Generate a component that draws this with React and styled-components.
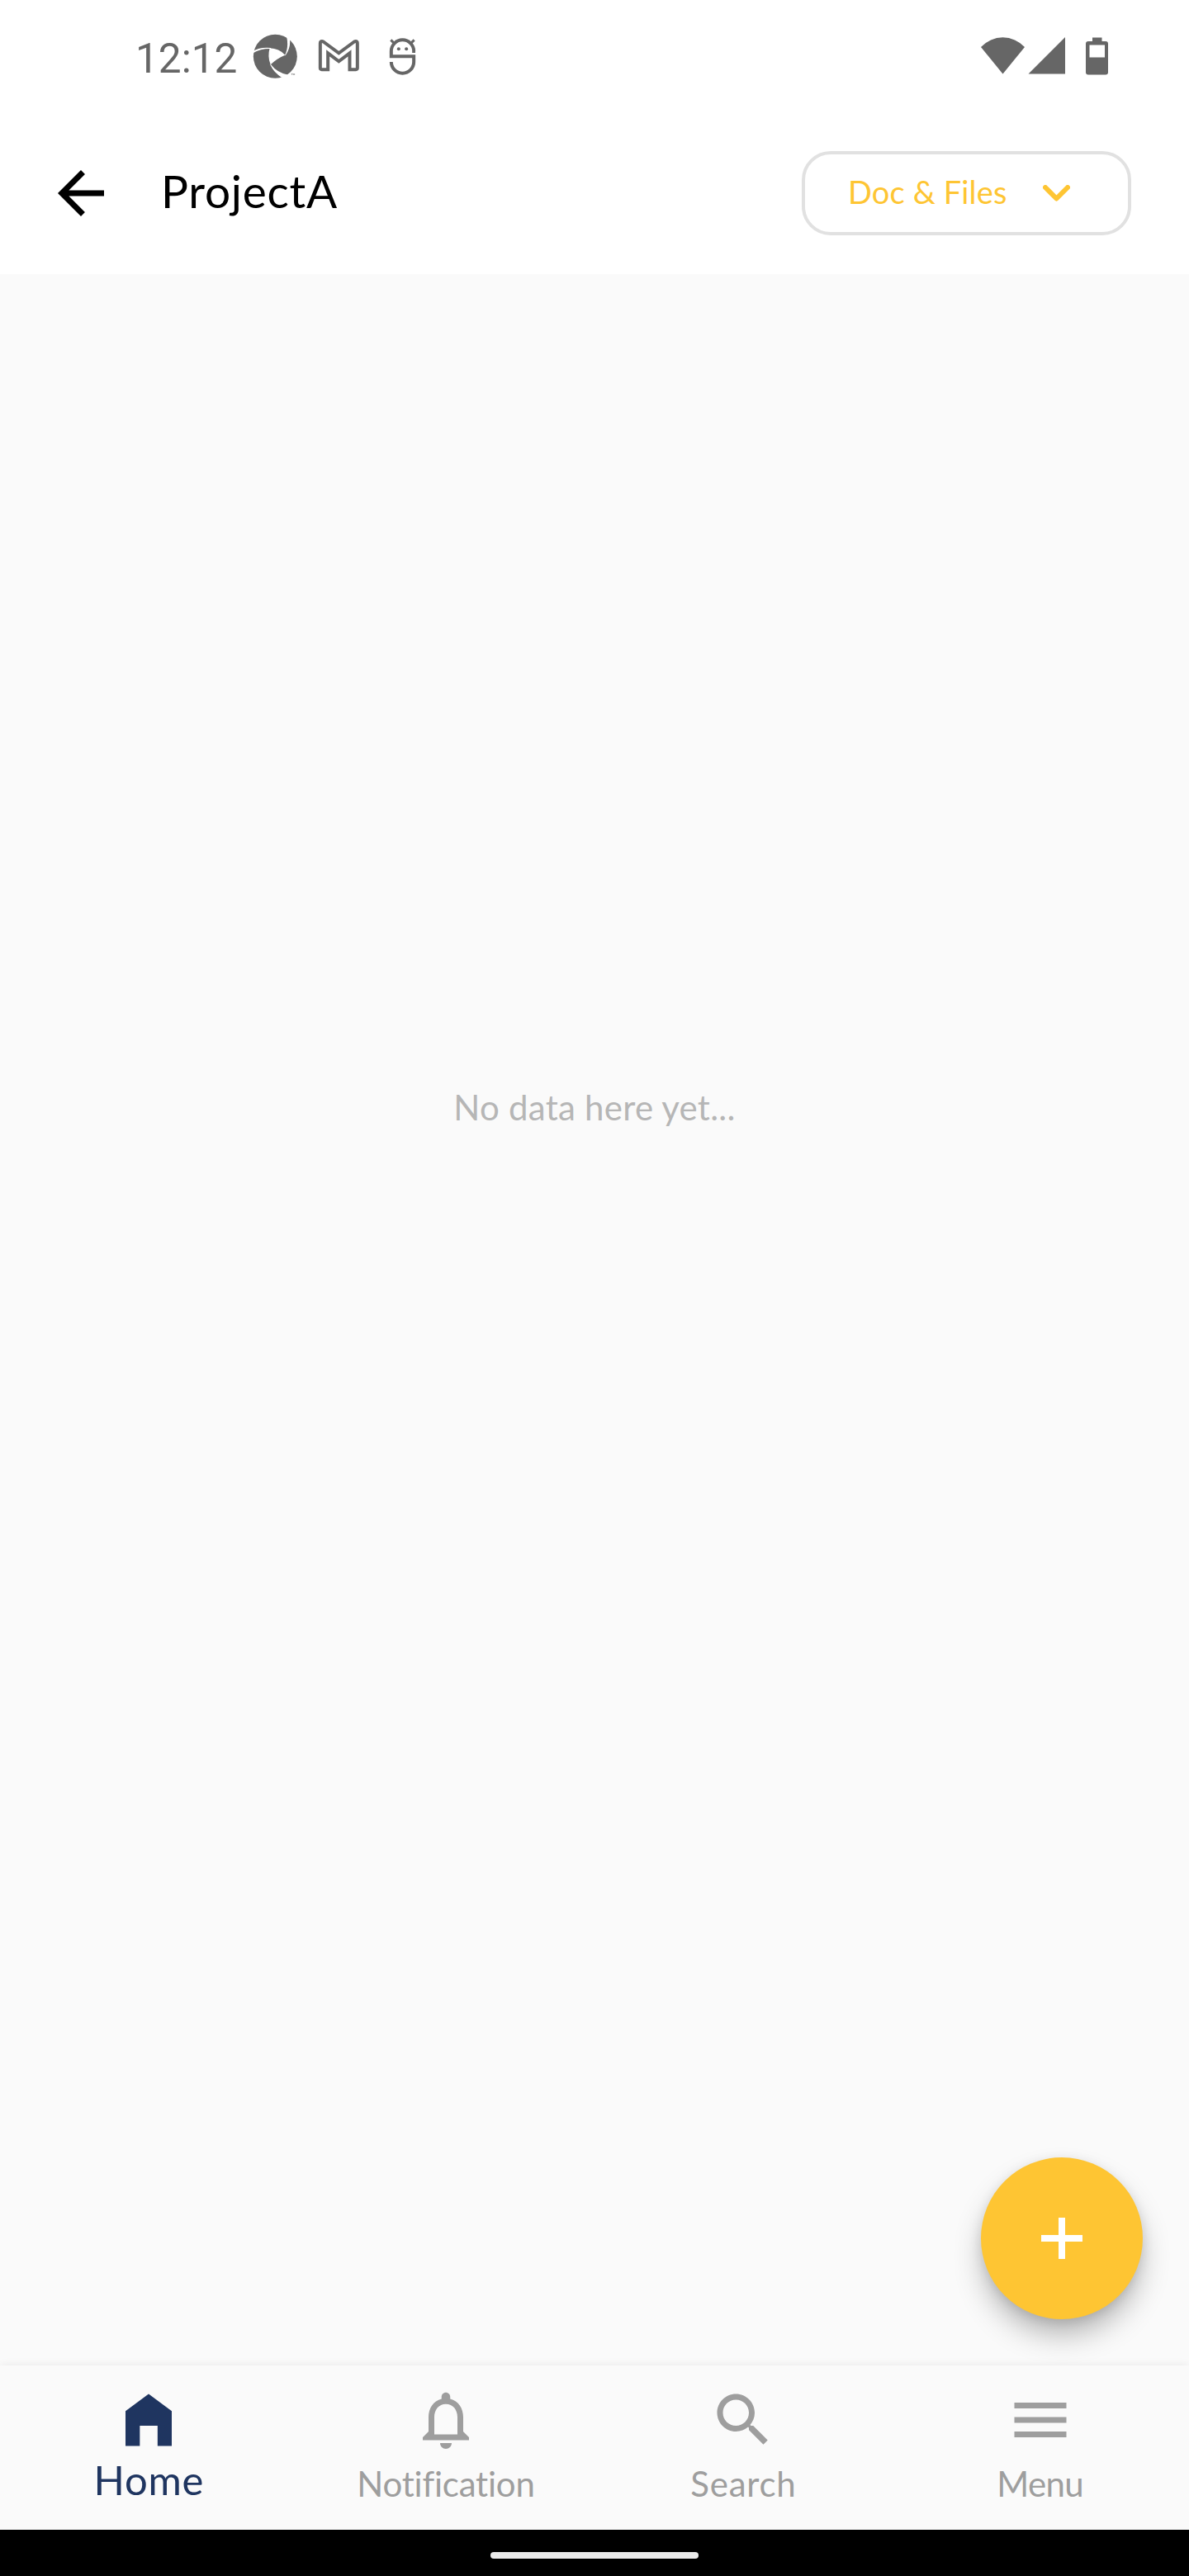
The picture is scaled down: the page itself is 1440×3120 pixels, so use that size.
import React from "react";
import styled, { createGlobalStyle } from "styled-components";

const GlobalStyle = createGlobalStyle`
  * { box-sizing: border-box; }
  body { margin: 0; background: #fafafa; }
  svg { display: block; flex: none; }
`;

const Screen = styled.div`
  width: 1440px;
  height: 3120px;
  display: flex;
  flex-direction: column;
  background: #fafafa;
  font-family: "Lato", "Liberation Sans", sans-serif;
  font-variant-ligatures: none;
  overflow: hidden;
`;

const StatusBar = styled.div`
  height: 136px;
  flex: none;
  padding: 2px 98px 0 164px;
  display: flex;
  align-items: center;
  justify-content: space-between;
  background: #fff;
  color: #666;
`;

const StatusGroup = styled.div`
  display: flex;
  align-items: center;
`;

const Clock = styled.span`
  width: 123.5px;
  padding-top: 3px;
  font: 49.5px/66px "Roboto", sans-serif;
`;

const StatusIcon = styled.svg`
  height: 66px;
  width: ${(p) => p.$w}px;
  margin-left: ${(p) => p.$gap || 0}px;
`;

const Header = styled.header`
  height: 196px;
  flex: none;
  padding: 0 70px 0 56px;
  display: flex;
  align-items: center;
  background: #fff;
`;

const Title = styled.h1`
  flex: 1;
  margin: 0 0 0 55px;
  padding-bottom: 6px;
  font-size: 55px;
  line-height: 70px;
  font-weight: 400;
  letter-spacing: 0.75px;
  color: #000;
`;

const Dropdown = styled.button`
  width: 399px;
  height: 102px;
  padding: 0 70px 0 52px;
  display: flex;
  align-items: center;
  justify-content: space-between;
  border: 4px solid #e1e1e1;
  border-radius: 35px;
  background: #fff;
  color: #fec533;
  font: 400 38px/50px "Lato", sans-serif;
  letter-spacing: 0.15px;
`;

const DropdownLabel = styled.span`
  padding-bottom: 5px;
`;

const Content = styled.main`
  position: relative;
  flex: 1;
  display: flex;
  justify-content: center;
  padding-top: 982px;
`;

const EmptyText = styled.p`
  margin: 0;
  font-size: 42px;
  line-height: 54px;
  letter-spacing: 0.25px;
  color: #b6b6b6;
`;

const AddButton = styled.button`
  position: absolute;
  right: 56px;
  bottom: 56px;
  width: 196px;
  height: 196px;
  padding: 0;
  border: 0;
  border-radius: 50%;
  display: flex;
  align-items: center;
  justify-content: center;
  background: #fec533;
  box-shadow: 0 21px 36px -4px rgba(0, 0, 0, 0.3), 0 3px 14px rgba(0, 0, 0, 0.1);
`;

const NavBar = styled.nav`
  height: 199px;
  flex: none;
  display: grid;
  grid-template-columns: repeat(4, 1fr);
  background: #fafafa;
  box-shadow: 0 0 10px rgba(0, 0, 0, 0.08);
  z-index: 1;
`;

const NavItem = styled.div`
  display: flex;
  flex-direction: column;
  align-items: center;
  padding-top: 24px;
  color: ${(p) => (p.$active ? "#1f3560" : "#9e9e9e")};
`;

const NavLabel = styled.span`
  margin-top: ${(p) => (p.$active ? 0 : 8)}px;
  font-size: ${(p) => (p.$active ? 49 : 42)}px;
  line-height: ${(p) => (p.$active ? 60 : 54)}px;
  letter-spacing: ${(p) => p.$spacing}px;
  margin-right: ${(p) => -p.$spacing}px;
`;

const GestureBar = styled.div`
  height: 56px;
  flex: none;
  display: flex;
  align-items: center;
  justify-content: center;
  padding-top: 6px;
  background: #000;
`;

const GestureHandle = styled.div`
  width: 252px;
  height: 8px;
  border-radius: 4px;
  background: #ebebeb;
`;

const MaterialIcon = ({ d }) => (
  <svg width="84" height="84" viewBox="0 0 24 24" fill="currentColor">
    <path d={d} />
  </svg>
);

const icons = {
  back: "M20 11H7.83l5.59-5.59L12 4l-8 8 8 8 1.41-1.41L7.83 13H20v-2z",
  home: "M12 3L20 8.95V21H15.1V14H8.95V21H4V8.95z",
  bell: "M12 22c1.1 0 2-.9 2-2h-4c0 1.1.9 2 2 2zm6-6v-5c0-3.07-1.63-5.64-4.5-6.32V4c0-.83-.67-1.5-1.5-1.5s-1.5.67-1.5 1.5v.68C7.64 5.36 6 7.92 6 11v5l-2 2v1h16v-1l-2-2zm-2 1H8v-6c0-2.48 1.51-4.5 4-4.5s4 2.02 4 4.5v6z",
  search:
    "M15.5 14h-.79l-.28-.27C15.41 12.59 16 11.11 16 9.5 16 5.91 13.09 3 9.5 3S3 5.91 3 9.5 5.91 16 9.5 16c1.61 0 3.09-.59 4.23-1.57l.27.28v.79l5 4.99L20.49 19l-4.99-5zm-6 0C7.01 14 5 11.99 5 9.5S7.01 5 9.5 5 14 7.01 14 9.5 11.99 14 9.5 14z",
  menu: "M3 18h18v-2H3v2zm0-5h18v-2H3v2zm0-7v2h18V6H3z",
};

const tabs = [
  { label: "Home", icon: "home", spacing: 0.75, active: true },
  { label: "Notification", icon: "bell", spacing: -0.2 },
  { label: "Search", icon: "search", spacing: 0.75 },
  { label: "Menu", icon: "menu", spacing: -0.7 },
];

export default function App() {
  return (
    <Screen>
      <GlobalStyle />
      <StatusBar>
        <StatusGroup>
          <Clock>12:12</Clock>
          <StatusIcon $w={55} $gap={18.5} viewBox="18 0 165 198">
            <circle cx="100" cy="97" r="79.5" fill="#666" />
            <path d="M80 67Q114 68 136 92Q106 104 83 127Q71 98 80 67z" fill="#fff" />
            <path
              d="M17 79Q45 62 84 66L84 69Q48 68 17 86zM135 93Q150 64 141 23L153 34Q157 66 137 94zM81 126Q96 156 124 174L148 164Q108 158 84 126z"
              fill="#fff"
            />
            <path d="M126 172.500Q100 158 88 138Q106 160 143 165Q137 170 126 172.500z" fill="#fff" />
            <path d="M158 160h6M161 160v5M166 165v-5l2 3 2-3v5" stroke="#666" strokeWidth="1.500" fill="none" />
          </StatusIcon>
          <StatusIcon $w={51} $gap={24} viewBox="15 0 153 198" fill="none" stroke="#666" strokeWidth="12">
            <path d="M23.500 139V50Q23.500 42 30 42Q34 42 37 45L91 85L145 45Q148 42 152 42Q158.500 42 158.500 50V139Q158.500 144.500 153 144.500H130.500V85L91 115L51.500 85V144.500H29Q23.500 144.500 23.500 139z" />
          </StatusIcon>
          <StatusIcon $w={33} $gap={35} viewBox="273 0 99 198" fill="none" stroke="#666" strokeWidth="12">
            <path d="M369 78H363.500A41 41 0 0 0 281.500 78V97H363.500V117A41 41 0 0 1 281.500 117" />
            <path d="M280 37L292 49M365 37L353 49" strokeWidth="9" />
            <circle cx="308.500" cy="70" r="6" fill="#666" stroke="none" />
            <circle cx="336.500" cy="70" r="6" fill="#666" stroke="none" />
          </StatusIcon>
        </StatusGroup>
        <StatusGroup>
          <StatusIcon $w={54} viewBox="1188 36 54 66" fill="#666">
            <path d="M1188 57A36 36 0 0 1 1241 57L1214.500 89.500z" />
          </StatusIcon>
          <StatusIcon $w={45} $gap={3} viewBox="1245 36 45 66" fill="#666">
            <path d="M1290 45V89.500H1245.500z" />
          </StatusIcon>
          <StatusIcon $w={27} $gap={25} viewBox="1315 36 27 66" fill="#666">
            <path
              fillRule="evenodd"
              d="M1323 45.500H1334.500V50H1339Q1342 50 1342 53V87.500Q1342 90.500 1339 90.500H1318Q1315 90.500 1315 87.500V53Q1315 50 1318 50H1323zM1319.500 54.500V69.500H1338V54.500z"
            />
          </StatusIcon>
        </StatusGroup>
      </StatusBar>

      <Header>
        <MaterialIcon d={icons.back} />
        <Title>ProjectA</Title>
        <Dropdown>
          <DropdownLabel>Doc &amp; Files</DropdownLabel>
          <svg width="33" height="20" viewBox="0 0 33 20" fill="none" stroke="currentColor">
            <path d="M3 3L16.500 16.500L30 3" strokeWidth="6" strokeLinecap="round" strokeLinejoin="round" />
          </svg>
        </Dropdown>
      </Header>

      <Content>
        <EmptyText>No data here yet...</EmptyText>
        <AddButton aria-label="Add">
          <svg width="50" height="50" viewBox="0 0 50 50" fill="#fff">
            <path d="M21 0h8v21h21v8H29v21h-8V29H0v-8h21z" />
          </svg>
        </AddButton>
      </Content>

      <NavBar>
        {tabs.map((t) => (
          <NavItem key={t.label} $active={t.active}>
            <MaterialIcon d={icons[t.icon]} />
            <NavLabel $active={t.active} $spacing={t.spacing}>
              {t.label}
            </NavLabel>
          </NavItem>
        ))}
      </NavBar>

      <GestureBar>
        <GestureHandle />
      </GestureBar>
    </Screen>
  );
}
